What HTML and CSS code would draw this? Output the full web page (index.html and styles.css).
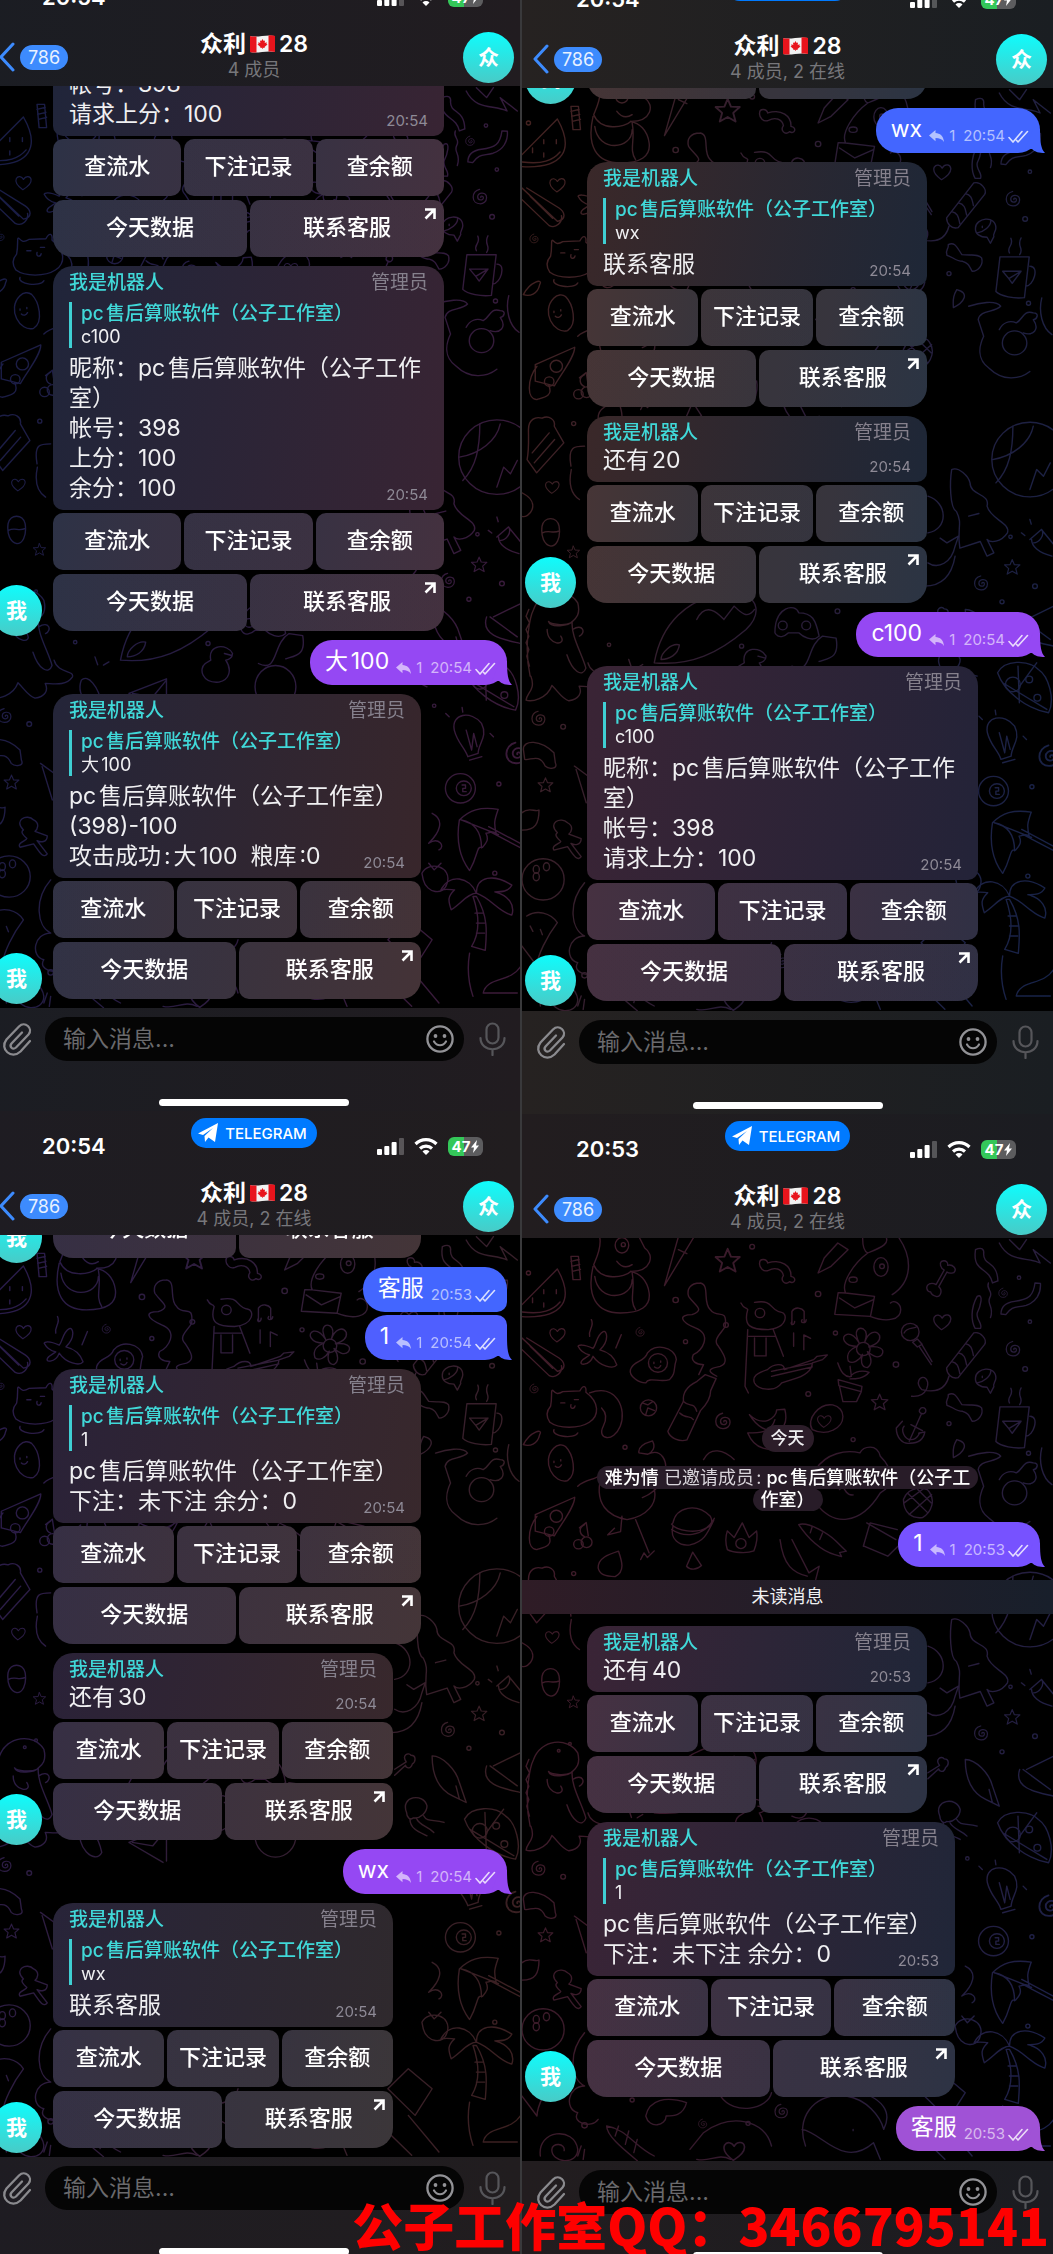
FILE: index.html
```
<!DOCTYPE html>
<html lang="zh-CN">
<head>
    <meta charset="UTF-8">
    <meta name="viewport" content="width=device-width, initial-scale=1.0">
    <title>众利28</title>
    <link rel="stylesheet" href="styles.css">
</head>
<body>
    <!-- Shared icons and the chat wallpaper -->
    <svg class="sprite" aria-hidden="true">
        <symbol id="chevron" viewBox="0 0 17 30"><path d="M15 2 3 15l12 13" fill="none" stroke="#3d8bfd" stroke-width="3" stroke-linecap="round" stroke-linejoin="round"/></symbol>
        <symbol id="plane" viewBox="0 0 20 20"><path fill="#fff" d="M0 10.500 20 0l-3 19-6.500-4.500L7 19l-.500-6L15 5 5 12z"/></symbol>
        <symbol id="signal" viewBox="0 0 27 18"><g fill="#fff"><rect x="0" y="12" width="5" height="6" rx="1"/><rect x="7.300" y="9" width="5" height="9" rx="1"/><rect x="14.600" y="5" width="5" height="13" rx="1"/><rect x="22" y="1" width="5" height="17" rx="1" opacity=".25"/></g></symbol>
        <symbol id="wifi" viewBox="0 0 24 18"><g fill="none" stroke="#fff" stroke-width="3.200"><path d="M1.500 7a15 15 0 0 1 21 0"/><path d="M6 11.500a9 9 0 0 1 12 0"/></g><path d="M12 18 8.500 14.500a5 5 0 0 1 7 0z" fill="#fff"/></symbol>
        <symbol id="bolt" viewBox="0 0 8 13"><path fill="#fff" d="M6 0 0 7.500h3L2 13l6-7.500H5z"/></symbol>
        <symbol id="flag" viewBox="0 0 25 18"><path fill="#f2f2f2" d="M0 1c8 2 16-2 25 0v16c-9-2-17 2-25 0z"/><path fill="#e8141c" d="M0 1c2 .600 4 .700 6.500.500v16C4 17.800 2 17.500 0 17zM18.500 .500c2.500-.300 4.500-.200 6.500.500v16c-2-.600-4-.700-6.500-.500zM12.500 4l1.200 2 1.300-.600-.300 2.600 2-.800-.200 1.800 1 .500-3 2.500.200 1-1.900-.200V14h-.600v-1.200l-1.900.200.200-1-3-2.500 1-.500-.200-1.800 2 .800-.300-2.600 1.300.600z"/></symbol>
        <symbol id="open" viewBox="0 0 12 12"><path d="M1 1.500h9.500V11M10 2 1.500 10.500" fill="none" stroke="#fff" stroke-width="2.600"/></symbol>
        <symbol id="reply" viewBox="0 0 15 12"><path fill="currentColor" d="M6.500 0v3C11 3.200 14.500 6 15 12c-2-3-4.500-4-8.500-4v3.200L0 5.600z"/></symbol>
        <symbol id="checks" viewBox="0 0 21 13"><path d="M1 7.500 5 12 14 1.500M10 12l9.500-10.500M8.500 10.300l1.500 1.700" fill="none" stroke="#fff" stroke-opacity=".8" stroke-width="1.600" stroke-linecap="round"/></symbol>
        <symbol id="tail" viewBox="0 0 20 24"><path fill="currentColor" d="M8 0h7c0 13 1 20 5 24-6 0-10-1-13-4H0z"/></symbol>
        <symbol id="clip" viewBox="0 0 30 34"><path d="m28 19-9.500 10.500C9.500 38 -3 27 4.500 17.500L17 4.500c6-6 14.500 2 9.500 8L14 25.500c-3.500 3-7-1-4.500-4L20 10.500" fill="none" stroke="#8a8a8e" stroke-width="2.300" stroke-linecap="round"/></symbol>
        <symbol id="smile" viewBox="0 0 28 28"><circle cx="14" cy="14" r="12.600" fill="none" stroke="#929296" stroke-width="2.300"/><circle cx="9.500" cy="11" r="1.900" fill="#929296"/><circle cx="18.500" cy="11" r="1.900" fill="#929296"/><path d="M8 16.500c3 5 9 5 12 0" fill="none" stroke="#929296" stroke-width="2.200" stroke-linecap="round"/></symbol>
        <symbol id="mic" viewBox="0 0 27 34"><g fill="none" stroke="#56565a" stroke-width="2.200" stroke-linecap="round"><rect x="7.500" y="1.500" width="12" height="20" rx="6"/><path d="M1.500 16c0 15 24 15 24 0M13.500 27.500V33"/></g></symbol>

        <symbol id="star" viewBox="0 0 60 60"><path d="m30 4 7 17 19 1-14 13 5 19-17-10-17 10 5-19L4 22l19-1z"/></symbol>
        <symbol id="heart" viewBox="0 0 60 60"><path d="M28 54C12 42 0 28 6 15c6-10 18-8 24 3C38 4 54 6 56 18c2 14-12 26-28 36z"/></symbol>
        <symbol id="spiral" viewBox="0 0 60 60"><path d="M30 32c-2-6 8-6 8 1 0 10-18 10-18-3 0-16 28-16 28 3 0 26-42 26-42-2 0-12 8-22 20-25"/></symbol>

        <symbol id="wallpaper" viewBox="6 355 1562 2770" preserveAspectRatio="none">
            <g fill="none" stroke="#fff" stroke-width="4" stroke-linecap="round" stroke-linejoin="round">
                <!-- top band -->
                <path d="M6 555 110 448c50 90 20 150-104 143M6 577c60 8 90-4 112-30"/>
                <path d="M70 510v12M37 535v14M70 550v12M107 510v12"/>
                <path d="M150 410h22l6 70h-22zM150 425l24-6M152 440l24-6M154 455l24-6"/>
                <path d="M235 355c5 30-10 60-18 80 20 50 90 40 110 20 60 0 70-50 40-70l-15-30M215 440c-20 90 10 140 80 140 60 0 90-20 85-60-5-40-30-60-55-65M330 460c10 50-10 80 10 110M220 470c10 80 110 70 110 10M285 425c15 20 30 20 45 10"/>
                <ellipse cx="300" cy="377" rx="20" ry="23"/><circle cx="304" cy="375" r="6"/>
                <path d="M510 355 425 498l40-143M466 390l25 12"/>
                <use href="#star" x="570" y="382" width="82" height="82"/>
                <path d="M705 430c0-14 20-14 24 0 40-14 70 10 68 40 20 4 10 26-4 16-14 12-28-4-18-18-4-20-24-26-44-16-14 6-28-8-26-22z"/>
                <path d="m935 370 30 20-50 50-38 20 18-45z"/>
                <path d="M1008 355c0 20 4 40 15 45 50-20 60-30 55-45M1115 355c40 60 40 130-20 170M1023 400c-40 30-80 90-65 120M958 520l85 10-12 60-105-6 10-65zM940 535l45 30 55-25M1030 590c50 20 90 10 90-20 0-20-20-30-30-20"/>
                <ellipse cx="1062" cy="442" rx="21" ry="28"/><circle cx="1065" cy="440" r="7"/><ellipse cx="980" cy="480" rx="12" ry="8"/>
                <path d="M1240 425c14-6 20 6 18 12 14-4 30 10 18 22-14 4-20-2-20-2l-24 44c12 10 6 30-6 30-16-4-18-14-18-14-12 0-16-18-4-24 10-4 20 2 20 2l24-44c-12-6-14-20-8-26z"/>
                <path d="M1340 390c20-10 26 0 24 14 0 34 40 20 42 80l-16 6c-10-50-60-30-50-100z"/>
                <path d="M1410 370c30 60 80 40 120 60l-20-40 50 40M1440 360l30 30 20-30"/>
                <path d="M1515 490c-5 40-20 50-60 55-30 4-40 20-40 38l14 2c20-28 30-20 60-28 30-10 44-36 42-66z"/>
                <use href="#spiral" x="1405" y="500" width="36" height="40"/>
                <path d="M1345 530c20-10 10 30 0 50-4 20 16 30 10 46h-16c-12-20-14-60 6-96zM1378 490c-8 20 16 24 4 44-10 20 14 26 2 60"/>
                <!-- second band -->
                <path d="M530 490c-30 0-40 20-34 40 20 30 50 40 10 55-40 0-36 20 10 40 50 20 20 70-6 80-10 20 10 30 30 30l-14 30M530 490c30 4 6 60 30 80 20 30 50-10 44 50-10 20-40 40-20 60 20 30 30 50 5 60-30 6-44 12-10 30"/>
                <path d="m545 765 32 12-16 36c0 30-20 50-30 60l-40 88c-20 6-50-4-56-26l46-90c-4-30 20-50 40-60zM480 845c20 20 30 0 40 30M470 880c20 20 30 4 40 20"/>
                <path d="M650 550c10 20 14 10 20 20-14 50 10 60 60 60 60-6 56-50 40-52-40-6-20-40-80-30M670 630l-8 170 10 20M745 630l30 80M670 650h80M690 655v54h34v-54M690 790c10 20 60 30 80 0l30-10c40-10 60-30 60-50l30-10 14-14-30 4-10 10-86 30c0-20-30-20-50 0-30 10-46 20-38 40zM740 755l120-24M740 770l120-28"/>
                <circle cx="706" cy="580" r="14"/>
                <path d="M800 615v-40c10-16 30-10 36 0v34M800 605c-8 12 8 14 8 0M830 600c-8 12 12 12 12 0M805 680v-40M835 690v-44l20 10"/>
                <use href="#heart" x="80" y="620" width="60" height="52"/>
                <use href="#heart" x="1210" y="578" width="64" height="58"/>
                <path d="M185 720c-20 20 20 20 30-10 20 30 60 40 70 26-10-30-30-40-50-45 30-30 20-60 10-55-20 10-20 40-30 50-30-14-44-10-44-6 10 20 24 24 34 26zM210 600c10 20-10 30-5 50M298 645l-16 40"/>
                <use href="#spiral" x="338" y="620" width="34" height="34"/>
                <path d="M6 655 110 755c30-6 20-30 5-40L20 655M6 690l80 78c20 10 40-10 36-30M30 680l66 66"/>
                <path d="M325 750c10-30 40-20 50-50 20-30 80-20 85 20-10 30 0 40-20 60-30 10-60-10-70 10-20 0-50-20-45-40z"/><circle cx="406" cy="730" r="28"/><path d="M394 728v4M414 724v4M396 742c8 6 14 4 18-4"/>
                <circle cx="1010" cy="688" r="20"/><path d="M992 680c-40 0-50-30-30-36 20-4 32 20 36 26-20-40 0-48 12-42 16 10 6 34 4 40 10-30 34-40 44-20 4 20-20 30-32 34 30-4 50 6 38 24-14 14-32-2-42-10 14 20 14 40 0 48-20 0-20-24-14-40-10 20-30 30-42 20-8-24 10-38 26-44zM975 770l-4-30M935 730c10 30 20 40 36 42 14-20 40-20 56-14-16 20-40 20-56 20M936 780l70 20-2 16-66-18zM940 800l10 46h40l14-30"/>
                <circle cx="1148" cy="637" r="26"/><path d="M1130 640c10-20 30-10 38-20M1155 668l14-10 14 16-14 8zM1174 680l36 55M1182 674l30 52"/>
                <path d="M1255 745 1335 640c20-6 40 20 32 34l-78 100c-20 6-34-14-34-29zM1270 726c20 4 20 20 24 36M1290 700c20 4 20 20 24 36M1310 672c20 4 20 20 24 36M1262 770c-10 40-40 50-80 40-20-20-6-40 8-36 20 10 10 60-38 56"/>
                <use href="#spiral" x="1425" y="660" width="56" height="56"/>
                <path d="M1340 775c0-30 60-40 60 0 0 10-10 20-6 26l-10 20-10-18c-20 0-36-10-34-28zM1345 790c20-4 40-20 40-36M1360 770v4"/>
                <path d="M1260 825c20-10 26 10 40 30 30 4 46-4 58 10 6 20-10 40-28 40-10-20-14-26-28-30-20 0-30-14-46-18-6-20 6-16 4-32z"/>
                <path d="M90 860c6-30 0-50 6-48 10 10 14 14 30 4l50-2c10-20 20-16 18 4 40 30 40 70 10 90-30 20-90 20-116 0-14-20-10-34 2-48zM100 930c-10 20 60 30 70 10M205 820c80-30 110 50 90 100-20 50-70 40-50 0 10-20 10-40-5-55M120 850h12M160 840h12M150 855c-4 14 10 14 12 4"/>
                <use href="#spiral" x="26" y="790" width="34" height="34"/>
                <circle cx="378" cy="865" r="24"/><path d="M360 850l16 6 14-10M370 885l6-20 20 8"/>
                <use href="#spiral" x="570" y="875" width="60" height="60"/>
                <path d="M675 885c40 40 80 10 80-14l24-2c20 80-60 90-104 16zM750 900c-10 40-50 40-80 40 20 50 70 60 90 36"/>
                <path d="M860 930c-20-30 20-80 60-74 40 8 40 60 0 76-20 10-40 8-60-2z"/><use href="#heart" x="872" y="882" width="46" height="46"/>
                <use href="#star" x="1028" y="820" width="60" height="56"/>
                <path d="M1180 865c14-6 20 14 6 18-14-2-14-12-6-18zM1180 885l-35 80M1150 915l34 18M1125 905l-18 20c0 30 20 50 40 46 24 0 40-10 44-34l-18 4M1130 920c-10 10 0 40 20 40 20 0 22-16 26-20"/>
                <path d="M1412 862h86l-14 122c-30 4-70-4-84-18zM1500 890c30 0 10 60-12 60M1420 905h54l-26 36-10-14zM1474 905l-36 22M1440 850c-10-20 14-20 4-44M1470 855c14-20-10-24 4-50"/>
                <!-- middle band -->
                <path d="M100 985c-40 40 0 110 40 98 30-20 16-80-6-102-10-8-24-6-34 4zM100 1025v4M120 1020v4M104 1040c6 6 14 4 18-4"/>
                <path d="M10 975c20-40 60-50 48-30-6 30-30 36-48 30M1285 960c40 10 20 40-10 54-2-30 2-40 10-54z"/>
                <path d="M350 1000c-4-20 20-30 40-36 10 20 0 34-14 40l-26-4zM376 1004c40-20 60 20 50 60-14 40-40 60-66 70M540 1020c20-40 60-30 90 0M235 1090c-10 60 20 100 80 110 60-10 90-50 80-90M170 1100c20-20 50-20 60-30M300 1190l-4 46-38 10 20-20M340 1200l40 100M355 1320l10-20 10 14 20-20M870 1050c30-50 90-60 130-50 10-20 50-30 60 10 40 40 40 90 0 110-60 100-140 100-190 30M940 1110c20-20 10 20 40 16"/>
                <path d="M1320 1010c30-10 80-20 94 0-20 20-60 10-66 40l16 50c-14 30-20 70 16 96 40 40 90 34 120 10M1410 1080c10-20 30-30 50-20 20-10 20-40 50-30 20 0 10 20 0 20 20 30 0 50-30 40"/>
                <circle cx="1455" cy="1120" r="36"/>
                <path d="M1535 985c-10 40 0 90 30 110M1128 1140c10-30 40-40 70-30 30 30 10 70-14 84-30 4-56-14-56-54zM1140 1120l60 60M1170 1110l40 40M1130 1150l60-45M1145 1185l66-60"/>
                <path d="m45 1185 116-52c0 30-40 80-60 116l-56-14zM50 1190c-30 40-30 100 0 100 20-6 50-10 34-44"/><circle cx="107" cy="1190" r="18"/><circle cx="86" cy="1236" r="14"/>
                <path d="M190 1215c-20 10-14 30 0 36M175 1225l20-16 6 40"/><circle cx="172" cy="1274" r="14"/><circle cx="196" cy="1268" r="16"/>
                <path d="M450 1210c10-50 70-60 110-20 10 20 0 30-10 34-30 20-90 10-104-10zM450 1220c-10 40 20 60 50 56 40-10 50-30 70-74M446 1230c30 20 90 30 126-34"/>
                <path d="M610 1290c-6-20-4-44 0-56l20 20 24-44 20 44 22-20c4 20 0 40-8 60-20 8-60 6-78-4z"/><circle cx="650" cy="1272" r="15"/>
                <path d="M820 1215c30-10 90 30 110 50l30 30-20 4 6 12-20-6c-40-10-80-50-106-90zM860 1220l-6 20M890 1240l-8 20M765 1260c10 80 40 100 80 110M800 1260l50 100 30-20-10 40"/>
                <path d="m1020 1210 86 50M1010 1280l20-70 80 20M1012 1280l70 30 30-30"/>
                <path d="M230 1345c0-30 30-40 60-50 10 30 20 60-10 76-30 0-46-6-50-26zM490 1340l18-42 26 40c-14 14-34 14-44 2z"/>
                <!-- cake and below -->
                <path d="M25 1380c0-30 20-40 40-34 20-10 40 4 36 24l28 50-80 90-28-40c6-30 4-60 4-90zM36 1450l50-60M42 1480l60-70M150 1490c-10-60 10-60 40-60M175 1590c-30-20-30-60-24-90"/>
                <use href="#heart" x="72" y="1525" width="46" height="56"/>
                <path d="M6 1570c60 30 20 80-2 70M65 1670c6-30 44-30 50 0 6 40-10 60-24 60-20-4-30-30-26-60zM66 1690c20-10 30 4 50-6"/>
                <use href="#star" x="136" y="1726" width="42" height="44"/>
                <circle cx="1500" cy="1470" r="112"/><path d="M1400 1540c40-40 50-100 50-170M1390 1470c60-10 110-50 120-100M1500 1560l20-60 20 20 20-40"/>
                <path d="M1270 1500c20-10 50 20 54 40 0 40 60 30 50 70 10 40 70 50 60 80-20 30-50 30-60 20l20 40-20 10-20-44-60 20c-10-60 10-70-10-110-20-10-20-90-14-126zM1320 1640l30-8"/>
                <path d="M1200 1580c60 20 60 100 0 110M1200 1780c30 20 70 0 80-50l10-30-34 20-20-14M1280 1760c-10 60-40 90-90 90"/>
                <use href="#star" x="1422" y="1766" width="52" height="54"/><use href="#spiral" x="1332" y="1814" width="54" height="54"/>
                <path d="m1500 1710 34-30 40 50M1505 1710c0 20 20 40 60 50M1535 1680c10 20-10 40-24 40M1475 1690l10 8M1500 1650l4 14"/>
                <path d="M1200 1960l34-22c-14-20 6-30 14-20 16 0 14 20 4 26-6 20-20 10-20 4l-32 30M1310 1920c30 0 70 40 80 80l20 60-40-20c-40-20-60-60-60-120zM1380 2010l10 40M1490 1950l80-40M1480 1950l80 60M1470 1950c-20 60 60 70 100 80"/>
                <!-- dinosaur -->
                <path d="M30 2120c-20-90 0-180 10-200 20-60 100-70 130-20 10 40-10 50-20 60-20 10-60 4-66-4 6 20 60 14 70 0-6 40 30 100 40 140-10 30-40 10-56-40M80 1980c0 50 60 50 40 20M155 1980c30-20 40 10 20 20M200 2080c10 40 60 30 54 50-20 30-60 20-80 20 10 20 0 40-30 44-20-6-30-26-50-46-14 40-60 50-76 44 0-20 30-30 14-72M26 1920l-8 20 10 20-10 20 8 20-8 20 8 20-6 20 8 30"/>
                <circle cx="114" cy="1894" r="4"/><circle cx="147" cy="1873" r="4"/>
                <use href="#spiral" x="30" y="2220" width="54" height="54"/>
                <path d="M1405 2110c20-40 90-40 120-10 30 20 50 90 30 130-60-10-130-60-150-120zM1465 2090l4 110M1420 2140l130 80M1470 2150l50-70"/><circle cx="1450" cy="2145" r="22"/><circle cx="1498" cy="2130" r="10"/><circle cx="1522" cy="2185" r="10"/>
                <path d="M1235 2090c-20-50 50-60 60-20 0 20-20 40-40 36-10 10-20-4-20-16zM1245 2110c0 30 30 40 50 50M1265 2110c10 20 30 20 50 40M1285 2100c10 20 30 10 60 20"/>
                <path d="M1375 2290c-10-50 50-60 80-20 20 40-10 60-10 90l-30 10c-10-30-30-40-40-80zM1410 2290l16 60 6-50 10 40M1360 2250l-10-10M1400 2236l-2-14M1480 2300l10 10M1420 2380l36-10"/>
                <use href="#spiral" x="1520" y="2320" width="80" height="80"/>
                <path d="M10 2340c0-30 50-30 90 10l4 30c10 20-20 20-30 10-16-40-44-16-60-20zM160 2390l40 30M165 2400l30 100"/>
                <use href="#star" x="50" y="2420" width="50" height="54"/>
                <circle cx="1393" cy="2465" r="44"/><circle cx="1403" cy="2465" r="22"/><path d="M1398 2455h10v10h-8v10h10"/>
                <path d="M110 2590c-30-30 10-50 30-30 20 10 10 30 4 34l36 14c0 20-20 20-30 14l30 40c-10 14-20 0-40-30l-40 10c-10-14 20-20 20-26-10-10-20-20-10-26z"/>
                <path d="M6 2530c20-20 40 0 50-8 0 40-10 60-50 60"/>
                <circle cx="68" cy="2730" r="62"/><ellipse cx="48" cy="2700" rx="9" ry="12"/><ellipse cx="78" cy="2692" rx="9" ry="12"/><ellipse cx="48" cy="2722" rx="9" ry="12"/>
                <path d="M1390 2560c30-30 60-40 114-32-10 30-14 40-6 72-10-10-20 0-30 0 10 20 0 30-10 42-20-4-10 20-38 70-30-40-40-90-30-152zM1395 2560l110 44M1395 2560c50 10 60 50 60 84M1470 2590l100 54M1476 2580l96 52"/>
                <path d="M1280 2720c20-40 90-20 74 30-10 40-60 30-70-10zM1300 2690l16 20 20-20M1310 2540c40 20 20 60-10 90 30-20 50 10 30 20"/>
                <path d="M1440 2780c-20-50-80-60-104-10 20-4 30 0 40 0-20 20-20 30-10 60 30-20 50-50 74-50 0-50 50-60 104-24-10 20-30 20-50 20 40 10 60 40 50 70-40-10-60-50-104-66zM1430 2790c20 60 20 110-4 150l40 12c4-50 10-100-26-162zM1436 2840h24M1440 2870h24M1440 2900h24M1420 2960c-10 60 0 100 10 130M1570 3000c-30 50-100 30-110 80h100"/>
                <path d="M190 2740c-50 60-40 140 0 160-50 0-60 70-20 80-20 30 40 50 60 20M20 2840c30-20 70-10 90 20-30 40-60 100-60 130l-44-60M30 2870l8 16M60 2880l6 16"/>
                <path d="M370 2990c10-50 60-60 120-40-10 40-40 40-60 40 0 30-50 40-60 0zM590 2930c40 60 140 40 150-10M840 3080c-30-80 20-160 120-150 60 10 100 60 110 100 30-60-20-90-40-100M830 3030c60 10 120 120 210 40l20 50M980 3030v4"/>
                <use href="#spiral" x="745" y="2950" width="52" height="52"/><use href="#spiral" x="522" y="2996" width="34" height="34"/>
                <path d="M255 3020c60 10 80 60 140 90M255 3020c0 30 50 70 90 104M290 3020l-10 30M320 3035l-10 40M345 3060l-10 40M60 3110c-10-80 100-90 110-20 0 50-80 40-76 0 0-20 40-20 36 4M170 3110l10-30M190 3090l-4 30M500 3090l40-50c80-60 180-40 200 40M520 3120c40 10 60-20 100 0"/>
                <use href="#heart" x="590" y="3060" width="80" height="70"/>
                <path d="M1170 3040l80 80M1180 2920l60-60 70 60-50 80zM1240 3000l90 110"/>
                <!-- rocket, gamepad, duck, pot -->
                <path d="M395 2080c20-110 90-200 230-210 90 10 80 70 40 110-80 70-160 110-270 100zM520 1950c30-60 70-10 80 0l30-40c20 20 40 40 60 10M415 2070c0-20 30-50 54-44-4 30-30 44-54 44z"/>
                <path d="M750 1990c0-80 60-90 70-60 40 0 50 20 60 70-20 20-50 0-60-10h-30c-10 10-30 20-40 0z"/><circle cx="773" cy="1968" r="13"/><circle cx="842" cy="1968" r="13"/>
                <path d="M660 2080c-10-50 50-50 64-20 0 14-14 20-20 20 20 30 10 60-20 66-50 4-60-40-40-56zM700 2060l22 6M800 2090c60 30 40-60 90-90l40 6c10 60-20 60-50 70"/>
                <ellipse cx="850" cy="2160" rx="60" ry="64"/><path d="m420 2180 110-44v100M420 2180l100 60M430 2180l60 10 40-50M280 2140c20-20 50 20 60 70-20 40-80-20-60-70zM320 2070l8 24M345 2095l16-10"/>
                <!-- loose dots -->
                <circle cx="458" cy="541" r="8"/><circle cx="683" cy="381" r="7"/><circle cx="877" cy="523" r="8"/><circle cx="606" cy="616" r="7"/><circle cx="487" cy="666" r="6"/><circle cx="848" cy="823" r="7"/><circle cx="1106" cy="735" r="8"/><circle cx="928" cy="640" r="6"/><circle cx="1468" cy="474" r="5"/><circle cx="1500" cy="606" r="5"/><circle cx="1486" cy="748" r="7"/><circle cx="309" cy="983" r="6"/><circle cx="980" cy="960" r="6"/><circle cx="25" cy="460" r="6"/><circle cx="158" cy="1362" r="6"/><circle cx="1262" cy="912" r="6"/><circle cx="1496" cy="1001" r="6"/><circle cx="1443" cy="1702" r="5"/><circle cx="1515" cy="1850" r="7"/><circle cx="1418" cy="1897" r="6"/><circle cx="1316" cy="2217" r="5"/><circle cx="127" cy="2272" r="7"/><circle cx="1506" cy="2452" r="6"/><circle cx="1494" cy="2720" r="6"/><circle cx="330" cy="2942" r="6"/><circle cx="190" cy="3018" r="8"/><circle cx="671" cy="3012" r="6"/><circle cx="934" cy="1925" r="7"/><circle cx="652" cy="2030" r="6"/><circle cx="262" cy="2026" r="5"/>
            </g>
        </symbol>
    </svg>

    <main class="board">
        <div class="column column-left">

            <section class="phone phone-a">
                <header class="top">
                    <div class="status">
                        <time class="clock">20:54</time>
                        <span class="live"><svg class="i-plane"><use href="#plane"/></svg>TELEGRAM</span>
                        <div class="signals"><svg class="i-signal"><use href="#signal"/></svg><svg class="i-wifi"><use href="#wifi"/></svg><span class="battery">47<svg class="i-bolt"><use href="#bolt"/></svg></span></div>
                    </div>
                    <nav class="nav">
                        <a class="back" href="#"><svg class="i-chevron"><use href="#chevron"/></svg><span class="badge">786</span></a>
                        <div class="heading"><h2>众利<svg class="i-flag"><use href="#flag"/></svg>28</h2><p>4 成员</p></div>
                        <span class="avatar">众</span>
                    </nav>
                </header>
                <div class="chat">
                    <svg class="wall"><use href="#wallpaper"/></svg>
                    <article class="row">
                        <div class="msg msg-lg">
                            <div class="bubble">
                                <p class="text">帐号：398<br>请求上分：100</p>
                                <time>20:54</time>
                            </div>
                            <div class="keys"><button>查流水</button><button>下注记录</button><button>查余额</button></div>
                            <div class="keys"><button>今天数据</button><button>联系客服<svg class="i-open"><use href="#open"/></svg></button></div>
                        </div>
                    </article>
                    <article class="row">
                        <span class="avatar">我</span>
                        <div class="msg msg-lg">
                            <div class="bubble">
                                <div class="from"><b>我是机器人</b><span>管理员</span></div>
                                <blockquote><b>pc售后算账软件（公子工作室）</b>c100</blockquote>
                                <p class="text">昵称：pc售后算账软件（公子工作室）<br>帐号：398<br>上分：100<br>余分：100</p>
                                <time>20:54</time>
                            </div>
                            <div class="keys"><button>查流水</button><button>下注记录</button><button>查余额</button></div>
                            <div class="keys"><button>今天数据</button><button>联系客服<svg class="i-open"><use href="#open"/></svg></button></div>
                        </div>
                    </article>
                    <div class="out violet"><span>大100</span><small><svg class="i-reply"><use href="#reply"/></svg>1</small><time>20:54</time><svg class="i-checks"><use href="#checks"/></svg><svg class="i-tail"><use href="#tail"/></svg></div>
                    <article class="row umber">
                        <span class="avatar">我</span>
                        <div class="msg msg-md">
                            <div class="bubble">
                                <div class="from"><b>我是机器人</b><span>管理员</span></div>
                                <blockquote><b>pc售后算账软件（公子工作室）</b>大100</blockquote>
                                <p class="text">pc售后算账软件（公子工作室）<br>(398)-100<br>攻击成功:大100&nbsp; 粮库:0</p>
                                <time>20:54</time>
                            </div>
                            <div class="keys"><button>查流水</button><button>下注记录</button><button>查余额</button></div>
                            <div class="keys"><button>今天数据</button><button>联系客服<svg class="i-open"><use href="#open"/></svg></button></div>
                        </div>
                    </article>
                </div>
                <footer class="composer">
                    <div class="entry">
                        <button class="icon-btn" aria-label="附件"><svg class="i-clip"><use href="#clip"/></svg></button>
                        <div class="field"><input type="text" placeholder="输入消息..." aria-label="输入消息"><button class="icon-btn" aria-label="表情"><svg class="i-smile"><use href="#smile"/></svg></button></div>
                        <button class="icon-btn" aria-label="语音"><svg class="i-mic"><use href="#mic"/></svg></button>
                    </div>
                    <div class="home"></div>
                </footer>
            </section>

            <section class="phone phone-c">
                <header class="top">
                    <div class="status">
                        <time class="clock">20:54</time>
                        <span class="live"><svg class="i-plane"><use href="#plane"/></svg>TELEGRAM</span>
                        <div class="signals"><svg class="i-signal"><use href="#signal"/></svg><svg class="i-wifi"><use href="#wifi"/></svg><span class="battery">47<svg class="i-bolt"><use href="#bolt"/></svg></span></div>
                    </div>
                    <nav class="nav">
                        <a class="back" href="#"><svg class="i-chevron"><use href="#chevron"/></svg><span class="badge">786</span></a>
                        <div class="heading"><h2>众利<svg class="i-flag"><use href="#flag"/></svg>28</h2><p>4 成员, 2 在线</p></div>
                        <span class="avatar">众</span>
                    </nav>
                </header>
                <div class="chat">
                    <svg class="wall"><use href="#wallpaper"/></svg>
                    <article class="row">
                        <span class="avatar">我</span>
                        <div class="msg msg-md">
                            <div class="keys"><button>今天数据</button><button>联系客服<svg class="i-open"><use href="#open"/></svg></button></div>
                        </div>
                    </article>
                    <div class="out blue joined"><span>客服</span><time>20:53</time><svg class="i-checks"><use href="#checks"/></svg></div>
                    <div class="out indigo"><span>1</span><small><svg class="i-reply"><use href="#reply"/></svg>1</small><time>20:54</time><svg class="i-checks"><use href="#checks"/></svg><svg class="i-tail"><use href="#tail"/></svg></div>
                    <article class="row">
                        <div class="msg msg-md">
                            <div class="bubble">
                                <div class="from"><b>我是机器人</b><span>管理员</span></div>
                                <blockquote><b>pc售后算账软件（公子工作室）</b>1</blockquote>
                                <p class="text">pc售后算账软件（公子工作室）<br>下注：未下注 余分：0</p>
                                <time>20:54</time>
                            </div>
                            <div class="keys"><button>查流水</button><button>下注记录</button><button>查余额</button></div>
                            <div class="keys"><button>今天数据</button><button>联系客服<svg class="i-open"><use href="#open"/></svg></button></div>
                        </div>
                    </article>
                    <article class="row">
                        <span class="avatar">我</span>
                        <div class="msg msg-sm">
                            <div class="bubble">
                                <div class="from"><b>我是机器人</b><span>管理员</span></div>
                                <p class="text">还有30</p>
                                <time>20:54</time>
                            </div>
                            <div class="keys"><button>查流水</button><button>下注记录</button><button>查余额</button></div>
                            <div class="keys"><button>今天数据</button><button>联系客服<svg class="i-open"><use href="#open"/></svg></button></div>
                        </div>
                    </article>
                    <div class="out violet"><span>wx</span><small><svg class="i-reply"><use href="#reply"/></svg>1</small><time>20:54</time><svg class="i-checks"><use href="#checks"/></svg><svg class="i-tail"><use href="#tail"/></svg></div>
                    <article class="row slate">
                        <span class="avatar">我</span>
                        <div class="msg msg-sm">
                            <div class="bubble">
                                <div class="from"><b>我是机器人</b><span>管理员</span></div>
                                <blockquote><b>pc售后算账软件（公子工作室）</b>wx</blockquote>
                                <p class="text">联系客服</p>
                                <time>20:54</time>
                            </div>
                            <div class="keys"><button>查流水</button><button>下注记录</button><button>查余额</button></div>
                            <div class="keys"><button>今天数据</button><button>联系客服<svg class="i-open"><use href="#open"/></svg></button></div>
                        </div>
                    </article>
                </div>
                <footer class="composer">
                    <div class="entry">
                        <button class="icon-btn" aria-label="附件"><svg class="i-clip"><use href="#clip"/></svg></button>
                        <div class="field"><input type="text" placeholder="输入消息..." aria-label="输入消息"><button class="icon-btn" aria-label="表情"><svg class="i-smile"><use href="#smile"/></svg></button></div>
                        <button class="icon-btn" aria-label="语音"><svg class="i-mic"><use href="#mic"/></svg></button>
                    </div>
                    <div class="home"></div>
                </footer>
            </section>
        </div>

        <div class="column column-right">

            <section class="phone phone-b">
                <header class="top">
                    <div class="status">
                        <time class="clock">20:54</time>
                        <span class="live"><svg class="i-plane"><use href="#plane"/></svg>TELEGRAM</span>
                        <div class="signals"><svg class="i-signal"><use href="#signal"/></svg><svg class="i-wifi"><use href="#wifi"/></svg><span class="battery">47<svg class="i-bolt"><use href="#bolt"/></svg></span></div>
                    </div>
                    <nav class="nav">
                        <a class="back" href="#"><svg class="i-chevron"><use href="#chevron"/></svg><span class="badge">786</span></a>
                        <div class="heading"><h2>众利<svg class="i-flag"><use href="#flag"/></svg>28</h2><p>4 成员, 2 在线</p></div>
                        <span class="avatar">众</span>
                    </nav>
                </header>
                <div class="chat">
                    <svg class="wall"><use href="#wallpaper"/></svg>
                    <article class="row">
                        <span class="avatar">我</span>
                        <div class="msg msg-sm">
                            <div class="keys"><button>今天数据</button><button>联系客服<svg class="i-open"><use href="#open"/></svg></button></div>
                        </div>
                    </article>
                    <div class="out blue"><span>wx</span><small><svg class="i-reply"><use href="#reply"/></svg>1</small><time>20:54</time><svg class="i-checks"><use href="#checks"/></svg><svg class="i-tail"><use href="#tail"/></svg></div>
                    <article class="row">
                        <div class="msg msg-sm">
                            <div class="bubble">
                                <div class="from"><b>我是机器人</b><span>管理员</span></div>
                                <blockquote><b>pc售后算账软件（公子工作室）</b>wx</blockquote>
                                <p class="text">联系客服</p>
                                <time>20:54</time>
                            </div>
                            <div class="keys"><button>查流水</button><button>下注记录</button><button>查余额</button></div>
                            <div class="keys"><button>今天数据</button><button>联系客服<svg class="i-open"><use href="#open"/></svg></button></div>
                        </div>
                    </article>
                    <article class="row">
                        <span class="avatar">我</span>
                        <div class="msg msg-sm">
                            <div class="bubble">
                                <div class="from"><b>我是机器人</b><span>管理员</span></div>
                                <p class="text">还有20</p>
                                <time>20:54</time>
                            </div>
                            <div class="keys"><button>查流水</button><button>下注记录</button><button>查余额</button></div>
                            <div class="keys"><button>今天数据</button><button>联系客服<svg class="i-open"><use href="#open"/></svg></button></div>
                        </div>
                    </article>
                    <div class="out violet"><span>c100</span><small><svg class="i-reply"><use href="#reply"/></svg>1</small><time>20:54</time><svg class="i-checks"><use href="#checks"/></svg><svg class="i-tail"><use href="#tail"/></svg></div>
                    <article class="row rosy">
                        <span class="avatar">我</span>
                        <div class="msg msg-lg">
                            <div class="bubble">
                                <div class="from"><b>我是机器人</b><span>管理员</span></div>
                                <blockquote><b>pc售后算账软件（公子工作室）</b>c100</blockquote>
                                <p class="text">昵称：pc售后算账软件（公子工作室）<br>帐号：398<br>请求上分：100</p>
                                <time>20:54</time>
                            </div>
                            <div class="keys"><button>查流水</button><button>下注记录</button><button>查余额</button></div>
                            <div class="keys"><button>今天数据</button><button>联系客服<svg class="i-open"><use href="#open"/></svg></button></div>
                        </div>
                    </article>
                </div>
                <footer class="composer">
                    <div class="entry">
                        <button class="icon-btn" aria-label="附件"><svg class="i-clip"><use href="#clip"/></svg></button>
                        <div class="field"><input type="text" placeholder="输入消息..." aria-label="输入消息"><button class="icon-btn" aria-label="表情"><svg class="i-smile"><use href="#smile"/></svg></button></div>
                        <button class="icon-btn" aria-label="语音"><svg class="i-mic"><use href="#mic"/></svg></button>
                    </div>
                    <div class="home"></div>
                </footer>
            </section>

            <section class="phone phone-d">
                <header class="top">
                    <div class="status">
                        <time class="clock">20:53</time>
                        <span class="live"><svg class="i-plane"><use href="#plane"/></svg>TELEGRAM</span>
                        <div class="signals"><svg class="i-signal"><use href="#signal"/></svg><svg class="i-wifi"><use href="#wifi"/></svg><span class="battery">47<svg class="i-bolt"><use href="#bolt"/></svg></span></div>
                    </div>
                    <nav class="nav">
                        <a class="back" href="#"><svg class="i-chevron"><use href="#chevron"/></svg><span class="badge">786</span></a>
                        <div class="heading"><h2>众利<svg class="i-flag"><use href="#flag"/></svg>28</h2><p>4 成员, 2 在线</p></div>
                        <span class="avatar">众</span>
                    </nav>
                </header>
                <div class="chat">
                    <svg class="wall"><use href="#wallpaper"/></svg>
                    <div class="day">今天</div>
                    <p class="notice"><span><b>难为情</b> 已邀请成员: <b>pc售后算账软件（公子工作室）</b></span></p>
                    <div class="out purple"><span>1</span><small><svg class="i-reply"><use href="#reply"/></svg>1</small><time>20:53</time><svg class="i-checks"><use href="#checks"/></svg><svg class="i-tail"><use href="#tail"/></svg></div>
                    <div class="unread">未读消息</div>
                    <article class="row">
                        <div class="msg msg-sm">
                            <div class="bubble">
                                <div class="from"><b>我是机器人</b><span>管理员</span></div>
                                <p class="text">还有40</p>
                                <time>20:53</time>
                            </div>
                            <div class="keys"><button>查流水</button><button>下注记录</button><button>查余额</button></div>
                            <div class="keys"><button>今天数据</button><button>联系客服<svg class="i-open"><use href="#open"/></svg></button></div>
                        </div>
                    </article>
                    <article class="row">
                        <span class="avatar">我</span>
                        <div class="msg msg-md">
                            <div class="bubble">
                                <div class="from"><b>我是机器人</b><span>管理员</span></div>
                                <blockquote><b>pc售后算账软件（公子工作室）</b>1</blockquote>
                                <p class="text">pc售后算账软件（公子工作室）<br>下注：未下注 余分：0</p>
                                <time>20:53</time>
                            </div>
                            <div class="keys"><button>查流水</button><button>下注记录</button><button>查余额</button></div>
                            <div class="keys"><button>今天数据</button><button>联系客服<svg class="i-open"><use href="#open"/></svg></button></div>
                        </div>
                    </article>
                    <div class="out orchid"><span>客服</span><time>20:53</time><svg class="i-checks"><use href="#checks"/></svg><svg class="i-tail"><use href="#tail"/></svg></div>
                </div>
                <footer class="composer">
                    <div class="entry">
                        <button class="icon-btn" aria-label="附件"><svg class="i-clip"><use href="#clip"/></svg></button>
                        <div class="field"><input type="text" placeholder="输入消息..." aria-label="输入消息"><button class="icon-btn" aria-label="表情"><svg class="i-smile"><use href="#smile"/></svg></button></div>
                        <button class="icon-btn" aria-label="语音"><svg class="i-mic"><use href="#mic"/></svg></button>
                    </div>
                    <div class="home"></div>
                </footer>
            </section>
        </div>
        <p class="contact">公子工作室QQ：3466795141</p>
    </main>
</body>
</html>
```
FILE: styles.css
```
* {
    box-sizing: border-box;
}
body {
    margin: 0;
    background: #000;
    color: #f0f0f2;
    font-family: Inter, "Noto Sans CJK SC", sans-serif;
    text-autospace: normal;
}
p, h2, blockquote {
    margin: 0;
}
button, input {
    font-family: inherit;
    border: none;
    padding: 0;
    background: none;
    color: inherit;
}
svg {
    display: block;
    flex: none;
}
.sprite {
    position: absolute;
    width: 0;
    height: 0;
}
.board {
    position: relative;
    display: grid;
    grid-template-columns: 522fr 531fr;
    height: 100vh;
    overflow: hidden;
}
.column {
    min-width: 0;
    overflow: hidden;
}
.column-left {
    border-right: 2px solid #39393b;
}
/* left shots are cropped by a few pixels on their left side */
.column-left .phone {
    margin-left: -12px;
}

/* colours per phone: bubble gradient, bars and wallpaper tint */
.phone-a {
    --from: #20253a;
    --to: #382433;
    --bar: linear-gradient(90deg, #1b1d23, #211c20);
    --tint: linear-gradient(100deg, #171d48, #3d1a38);
    margin-top: -38px;
}
.phone-b {
    --from: #3a2829;
    --to: #1e2737;
    --bar: linear-gradient(90deg, #262221, #1a1e22);
    --tint: linear-gradient(100deg, #45221f, #2a1c36 50%, #16234a);
    margin-top: -36px;
}
.phone-c {
    --from: #2a2238;
    --to: #38282c;
    --bar: linear-gradient(90deg, #1e1c22, #211d1f);
    --tint: linear-gradient(100deg, #281b4c, #3c201f);
}
.phone-d {
    --from: #3a2436;
    --to: #202638;
    --bar: linear-gradient(90deg, #221d1f, #1b1c21);
    --tint: linear-gradient(100deg, #421c28, #35192c 50%, #1a214c);
}
.rosy {
    --from: #3a2435;
    --to: #232338;
}
.umber {
    --from: #242539;
    --to: #38262b;
}
.slate {
    --from: #282439;
    --to: #2f292d;
}

/* header */
.top {
    height: 124px;
    background: var(--bar);
}
.status {
    display: grid;
    grid-template-columns: 1fr auto 1fr;
    align-items: start;
    height: 66px;
    padding-top: 7px;
}
.clock {
    margin: 14px 0 0 54px;
    font-size: 22px;
    line-height: 28px;
    font-weight: 600;
    color: #fff;
}
.live {
    display: flex;
    align-items: center;
    gap: 7px;
    height: 30px;
    padding: 0 10px 0 7px;
    border-radius: 15px;
    background: #007aff;
    color: #fff;
    font-size: 15px;
    font-weight: 500;
}
.signals {
    display: flex;
    align-items: center;
    justify-content: flex-end;
    gap: 10px;
    height: 28px;
    margin: 14px 37px 0 0;
}
.battery {
    display: flex;
    align-items: center;
    justify-content: center;
    gap: 1px;
    width: 35px;
    height: 19px;
    border-radius: 6px;
    background: linear-gradient(90deg, #34c759 47%, #5c5c5e 47%);
    color: #fff;
    font-size: 15px;
    font-weight: 700;
}
.nav {
    display: grid;
    grid-template-columns: 1fr auto 1fr;
    align-items: center;
    height: 58px;
    padding: 0 6px;
}
.back {
    display: flex;
    align-items: center;
    gap: 5px;
    margin-left: 4px;
    text-decoration: none;
}
.badge {
    width: 48px;
    border-radius: 13px;
    background: #3d8bfd;
    color: #e8f1ff;
    font-size: 18px;
    line-height: 25px;
    text-align: center;
}
.heading {
    padding-bottom: 2px;
    text-align: center;
    text-autospace: no-autospace;
}
.heading h2 {
    display: flex;
    align-items: center;
    justify-content: center;
    gap: 4px;
    color: #fff;
    font-size: 23px;
    line-height: 27px;
    font-weight: 600;
}
.heading p {
    color: #77777b;
    font-size: 18px;
    line-height: 24px;
}
.avatar {
    justify-self: end;
    width: 51px;
    height: 51px;
    border-radius: 50%;
    background: linear-gradient(#0ffcfc, #48cbc7);
    color: #fff;
    font-size: 21px;
    line-height: 51px;
    font-weight: 600;
    text-align: center;
}

/* messages */
.chat {
    position: relative;
    display: flex;
    flex-direction: column;
    justify-content: flex-end;
    gap: 9px;
    height: 922px;
    padding-bottom: 9px;
    overflow: hidden;
    background: #000;
    isolation: isolate;
}
.column-right .chat {
    height: 923px;
    padding-bottom: 10px;
}
.chat > * {
    flex: none;
}
.wall {
    position: absolute;
    inset: 0;
    z-index: -2;
    width: 100%;
    height: 100%;
}
/* tints the white wallpaper strokes */
.chat::before {
    content: "";
    position: absolute;
    inset: 0;
    z-index: -1;
    background: var(--tint);
    mix-blend-mode: multiply;
}
.row {
    position: relative;
    display: grid;
    grid-template-columns: 62px auto;
    justify-content: start;
}
.row .avatar {
    align-self: end;
    justify-self: start;
    margin: 0 0 -5px 3px;
}
.msg {
    grid-column: 2;
    margin-left: 3px;
}
.msg-sm {
    width: 340px;
}
.msg-md {
    width: 368px;
}
.msg-lg {
    width: 391px;
}
.bubble {
    position: relative;
    padding: 6px 16px 7px;
    border-radius: 20px 20px 10px 10px;
    background: linear-gradient(100deg, var(--from), var(--to));
}
.bubble time {
    position: absolute;
    right: 16px;
    bottom: 6px;
    color: #8e8a96;
    font-size: 15px;
    line-height: 18px;
}
.from {
    display: flex;
    justify-content: space-between;
    color: #85808c;
    font-size: 19px;
    line-height: 22px;
}
.from b {
    color: #40d8d8;
    font-weight: 500;
}
blockquote {
    margin: 8px 0 5px;
    padding-left: 9px;
    border-left: 3px solid #3fcfd3;
    font-size: 18px;
    line-height: 23px;
}
blockquote b {
    display: block;
    color: #40d8d8;
    font-size: 19px;
    font-weight: 500;
}
.text {
    margin-top: 1px;
    font-size: 23px;
    line-height: 30px;
}
.keys {
    display: grid;
    grid-auto-flow: column;
    grid-auto-columns: 1fr;
    gap: 3px;
    margin-top: 3px;
}
.keys + .keys {
    margin-top: 4px;
}
.keys button {
    --mid: color-mix(in srgb, var(--from), var(--to));
    --start: color-mix(in srgb, var(--from) 65%, var(--to));
    --end: color-mix(in srgb, var(--from) 35%, var(--to));
    position: relative;
    height: 57px;
    padding-bottom: 7px;
    border-radius: 10px;
    background: linear-gradient(#ffffff0f, #ffffff0f), linear-gradient(100deg, var(--start), var(--end));
    color: #fff;
    font-size: 22px;
    font-weight: 500;
}
.keys button:first-child {
    --start: var(--from);
    --end: var(--mid);
}
.keys button:last-child {
    --start: var(--mid);
    --end: var(--to);
}
.keys:last-child button:first-child {
    border-bottom-left-radius: 20px;
}
.keys:last-child button:last-child {
    border-bottom-right-radius: 20px;
}
.out {
    position: relative;
    display: flex;
    align-items: flex-end;
    align-self: flex-end;
    height: 45px;
    margin-right: 13px;
    padding: 0 11px 8px 15px;
    border-radius: 22px;
    background: currentColor;
}
.joined {
    margin-bottom: -6px;
    border-bottom-right-radius: 10px;
}
.joined + .out {
    border-top-right-radius: 10px;
}
.out span {
    margin-right: 7px;
    color: #fff;
    font-size: 23px;
    line-height: 32px;
}
.out small, .out time {
    color: #ffffff99;
    font-size: 15px;
    line-height: 18px;
}
.out small {
    display: flex;
    align-items: center;
    gap: 5px;
    margin-right: 8px;
}
.out time {
    margin-right: 3px;
}
.out.blue { color: #4366ff; }
.out.indigo { color: #4f5fff; }
.out.purple { color: #7752ff; }
.out.violet { color: #9548f3; }
.out.orchid { color: #a052d6; }

.day {
    position: relative;
    align-self: center;
    margin-bottom: 4px;
    padding: 0 9px;
    border-radius: 14px;
    background: #2c1d29;
    font-size: 17px;
    line-height: 27px;
    font-weight: 500;
}
.notice {
    position: relative;
    align-self: center;
    max-width: 404px;
    padding: 2px 8px;
    color: #d8d4da;
    font-size: 18px;
    line-height: 22px;
    text-align: center;
}
.notice span {
    padding: 1px 8px;
    border-radius: 13px;
    background: #281c28;
    -webkit-box-decoration-break: clone;
    box-decoration-break: clone;
}
.notice b {
    color: #fff;
    font-weight: 500;
}
.unread {
    position: relative;
    margin: 4px 0 3px;
    background: linear-gradient(90deg, #2f1c26, #181f2b);
    font-size: 18px;
    line-height: 34px;
    text-align: center;
}

/* composer */
.composer {
    height: 103px;
    padding: 9px 14px 0;
    background: var(--bar);
}
.entry {
    display: flex;
    align-items: center;
}
.field {
    display: flex;
    align-items: center;
    flex: 1;
    min-width: 0;
    height: 44px;
    margin: 0 15px 0 13px;
    padding: 0 10px 0 18px;
    border-radius: 22px;
    background: #050505;
}
.field input {
    flex: 1;
    min-width: 0;
    font-size: 23px;
    outline: none;
    text-autospace: no-autospace;
}
.field input::placeholder {
    color: #6a6a6d;
}
.home {
    width: 190px;
    height: 7px;
    margin: 38px auto 0;
    border-radius: 4px;
    background: #fff;
}
.contact {
    position: absolute;
    right: 4px;
    bottom: 0;
    color: #f00;
    font-family: "Noto Sans CJK SC", sans-serif;
    font-size: 51px;
    line-height: 60px;
    font-weight: 900;
    white-space: nowrap;
    text-autospace: no-autospace;
}

/* icon sizes */
.i-chevron { width: 17px; height: 30px; }
.i-plane { width: 20px; height: 20px; }
.i-signal { width: 27px; height: 18px; }
.i-wifi { width: 24px; height: 18px; }
.i-bolt { width: 8px; height: 13px; }
.i-flag { width: 25px; height: 18px; }
.i-reply { width: 15px; height: 12px; }
.i-checks { width: 21px; height: 13px; margin-bottom: 2px; }
.i-clip { width: 30px; height: 34px; }
.i-smile { width: 28px; height: 28px; }
.i-mic { width: 27px; height: 34px; }
.i-open {
    position: absolute;
    top: 8px;
    right: 8px;
    width: 12px;
    height: 12px;
}
.i-tail {
    position: absolute;
    right: -5px;
    bottom: 0;
    width: 20px;
    height: 24px;
}
```
